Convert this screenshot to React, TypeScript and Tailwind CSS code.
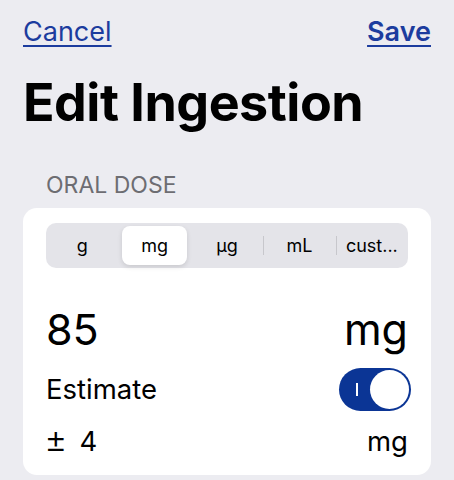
import { useState } from "react"

type Unit = "g" | "mg" | "µg" | "mL" | "cust..."

const UNITS: Unit[] = ["g", "mg", "µg", "mL", "cust..."]

function UnitPicker({ value, onChange }: { value: Unit; onChange: (u: Unit) => void }) {
  const selectedIndex = UNITS.indexOf(value)
  return (
    <div className="flex h-[45px] items-stretch rounded-[10px] bg-[#e4e4e9] py-[3px]">
      {UNITS.map((u, i) => {
        const selected = u === value
        // divider sits left of a segment, hidden next to the selected one
        const showDivider = i > 0 && i !== selectedIndex && i - 1 !== selectedIndex
        return (
          <div key={u} className="relative flex flex-1 px-[4px]">
            {i > 0 && (
              <div
                className={`absolute left-0 top-[10px] h-[19px] w-px ${showDivider ? "bg-[#c7c7cc]" : "bg-transparent"}`}
              />
            )}
            <button
              type="button"
              onClick={() => onChange(u)}
              className={[
                "flex flex-1 items-center justify-center rounded-[8px] text-[18px] text-black",
                selected ? "bg-white shadow-[0_2px_5px_rgba(0,0,0,0.12)]" : "",
              ].join(" ")}
            >
              {u}
            </button>
          </div>
        )
      })}
    </div>
  )
}

function Toggle({ on, onChange }: { on: boolean; onChange: (v: boolean) => void }) {
  return (
    <button
      type="button"
      onClick={() => onChange(!on)}
      className={`relative h-[43px] w-[72px] rounded-full ${on ? "bg-[#0b3595]" : "bg-[#e9e9ea]"}`}
    >
      {on && <span className="absolute left-[17px] top-[15px] h-[13px] w-[2px] bg-white" />}
      <span
        className={`absolute top-[2px] h-[39px] w-[39px] rounded-full bg-white ${on ? "right-[2px]" : "left-[2px]"}`}
      />
    </button>
  )
}

export default function App() {
  const [unit, setUnit] = useState<Unit>("mg")
  const [estimate, setEstimate] = useState(true)

  return (
    <div className="h-[480px] w-[454px] overflow-hidden bg-[#ececf1] font-['Inter',sans-serif] text-black">
      <div className="flex items-center justify-between px-[23px] pt-[14px]">
        <a className="text-[27px] leading-[36px] text-[#1c3c9e] underline underline-offset-[4px] decoration-[2px]">
          Cancel
        </a>
        <a className="text-[27px] font-semibold leading-[36px] text-[#1c3c9e] underline underline-offset-[4px] decoration-[2px]">
          Save
        </a>
      </div>

      <h1 className="mt-[25px] px-[23px] text-[52px] font-bold leading-[56px] tracking-[-0.5px]">
        Edit Ingestion
      </h1>

      <div className="mt-[40px] px-[46px] text-[23px] leading-[28px] text-[#6d6d72]">ORAL DOSE</div>

      <div className="mx-[23px] mt-[9px] rounded-[14px] bg-white pb-[17px] pl-[23px] pr-[20px] pt-[15px]">
        <div className="mr-[3px]">
          <UnitPicker value={unit} onChange={setUnit} />
        </div>

        <div className="mr-[3px] mt-[38px] flex items-end justify-between text-[43px] leading-[46px]">
          <span>85</span>
          <span>{unit}</span>
        </div>

        <div className="mt-[16px] flex items-center justify-between">
          <span className="text-[27.5px]">Estimate</span>
          <Toggle on={estimate} onChange={setEstimate} />
        </div>

        <div className="mr-[3px] mt-[12px] flex items-baseline justify-between text-[27.5px] leading-[34px]">
          <span className="flex items-baseline">
            <span className="ml-[1px] font-['Liberation_Sans',sans-serif] text-[32px] leading-[34px]">±</span>
            <span className="ml-[15px]">4</span>
          </span>
          <span>{unit}</span>
        </div>
      </div>
    </div>
  )
}
